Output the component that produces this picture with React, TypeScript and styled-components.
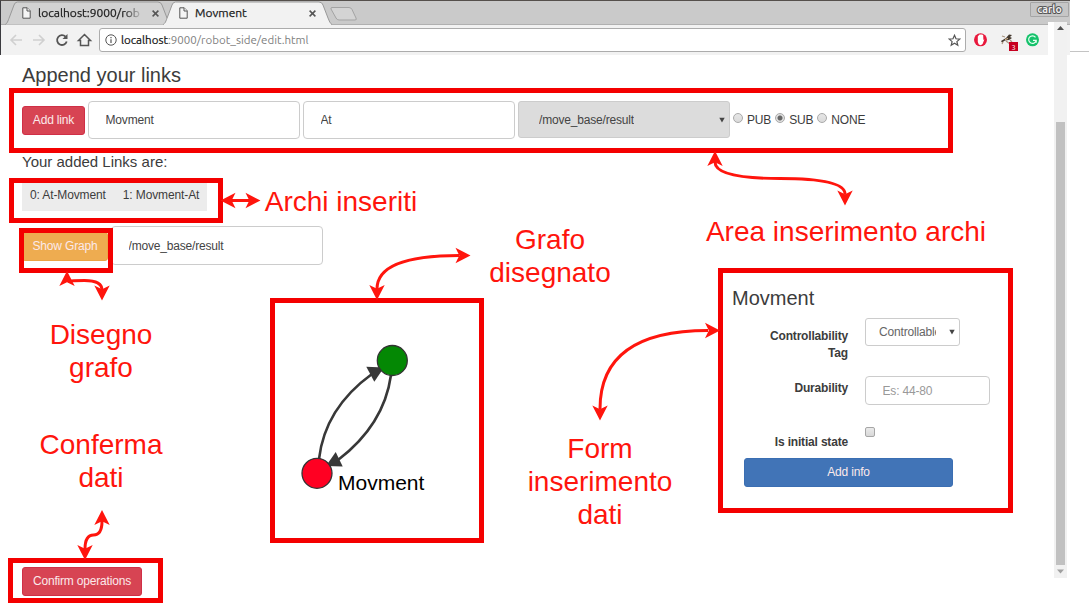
import React from "react";
import styled, { createGlobalStyle, css } from "styled-components";

const GlobalStyle = createGlobalStyle`
  * { box-sizing: border-box; }
  html, body { margin: 0; padding: 0; background: #fff; overflow: hidden; }
  body { font-family: "Liberation Sans", Arial, sans-serif; color: #3c3c3c; }
  input, select, button { font-family: inherit; margin: 0; outline: none; }
`;

const MARK = "#ff150d";

const smallText = css`
  font-size: 12px;
  letter-spacing: -0.18px;
`;

const Screen = styled.div`
  position: relative;
  width: 1091px;
  height: 603px;
  overflow: hidden;
  display: flex;
  flex-direction: column;
`;

/* ---------- browser window ---------- */

const Browser = styled.header`
  width: 1070px;
  height: 55px;
  flex: none;
  display: flex;
  flex-direction: column;
  border-top: 1px solid #55504c;
  border-left: 1px solid #3c3c40;
  background: #f2f2f2;
  font-family: Ubuntu, "Noto Sans", sans-serif;
`;

const TabStrip = styled.div`
  height: 24px;
  flex: none;
  display: flex;
  background: #cacaca;
  border-bottom: 1px solid #b0b0b0;
`;

const TabBox = styled.div<{ $width: number; $active?: boolean }>`
  position: relative;
  z-index: ${(p) => (p.$active ? 2 : 1)};
  width: ${(p) => p.$width}px;
  height: 24px;
  flex: none;
  display: flex;
  align-items: center;
  margin-left: ${(p) => (p.$active ? -8 : 4)}px;
  padding: ${(p) => (p.$active ? "0 16px" : "0 12px 0 17px")};
  color: #1c1c1c;
  > svg { position: relative; flex: none; }
`;

const TabShape = styled.svg`
  && { position: absolute; left: 0; top: 0; overflow: visible; }
`;

const TabTitle = styled.span<{ $fade?: boolean }>`
  position: relative;
  flex: 1;
  margin: 0 9px 0 7px;
  white-space: nowrap;
  font-size: 12px;
  line-height: 16px;
  -webkit-text-stroke: 0.25px #1c1c1c;
  ${(p) =>
    p.$fade &&
    css`
      mask-image: linear-gradient(to right, #000 82%, transparent 100%);
    `}
`;

const NewTab = styled.svg`
  margin: 5px 0 0 -3px;
`;

const UserTag = styled.div`
  margin: 1px 1px 0 auto;
  width: 39px;
  height: 15px;
  border: 1px solid #a5a5a5;
  border-radius: 1px;
  background: #c6c6c6;
  color: #eee;
  font-size: 10.5px;
  font-weight: 600;
  line-height: 13px;
  text-align: center;
  -webkit-text-stroke: 2px #555;
  paint-order: stroke fill;
`;

const Toolbar = styled.div`
  flex: 1;
  display: flex;
  align-items: center;
  padding-left: 8px;
  > svg { flex: none; }
`;

const NavIcons = styled.svg`
  margin-right: 6px;
`;

const Address = styled.div`
  width: 867px;
  height: 24px;
  display: flex;
  align-items: center;
  padding: 0 4px 0 5px;
  border: 1px solid #acacac;
  border-radius: 3px;
  background: #fff;
`;

const Url = styled.span`
  flex: 1;
  margin: -1px 0 0 4px;
  font-size: 11.55px;
  line-height: 16px;
  color: #808080;
  b { font-weight: 400; color: #111; -webkit-text-stroke: 0.2px #111; }
`;

const Extensions = styled.svg`
  margin-left: 8px;
`;

const ScrollGutter = styled.div`
  position: absolute;
  left: 1048px;
  top: 22px;
  width: 19px;
  height: 556px;
  padding-left: 6px;
  background: #fff;
`;

const ScrollTrack = styled.div`
  width: 13px;
  height: 100%;
  display: flex;
  flex-direction: column;
  align-items: center;
  justify-content: space-between;
  background: #f1f1f1;
`;

const ScrollThumb = styled.div`
  width: 9px;
  height: 443px;
  margin-top: 88px;
  background: #c1c1c1;
`;

const EdgeRule = styled.div`
  position: absolute;
  left: 1070px;
  top: 51px;
  width: 19px;
  height: 1px;
  background: #c4c4c4;
`;

/* ---------- page ---------- */

const Page = styled.main`
  flex: 1;
  display: flex;
  flex-direction: column;
  padding: 8px 0 0 22px;
`;

const Title = styled.h1`
  margin: 0;
  font-size: 20px;
  font-weight: 400;
  line-height: 24px;
`;

const LinkRow = styled.div`
  display: flex;
  align-items: center;
  gap: 3px;
  height: 39px;
  margin-top: 13px;
  > button { margin-top: 2px; }
`;

type Tone = "danger" | "warning" | "primary";
const tones: Record<Tone, [string, string]> = {
  danger: ["#d74453", "#d02f46"],
  warning: ["#eeac50", "#eba445"],
  primary: ["#4174b7", "#3b6eb2"],
};

const Button = styled.button<{ $tone: Tone; $width: number }>`
  flex: none;
  width: ${(p) => p.$width}px;
  height: 29px;
  padding: 0;
  border: 1px solid ${(p) => tones[p.$tone][1]};
  border-radius: 3px;
  background: ${(p) => tones[p.$tone][0]};
  color: #fbe9ea;
  ${smallText}
  line-height: 27px;
`;

const TextField = styled.input<{ $width: number; $height: number }>`
  width: ${(p) => p.$width}px;
  height: ${(p) => p.$height}px;
  padding: 0 16.5px;
  border: 1px solid #ccc;
  border-radius: 4px;
  background: #fff;
  color: #444;
  ${smallText}
  &::placeholder { color: #999; opacity: 1; }
`;

const SelectWrap = styled.div<{ $width: number; $height: number; $filled?: boolean }>`
  width: ${(p) => p.$width}px;
  height: ${(p) => p.$height}px;
  display: flex;
  align-items: center;
  border: 1px solid #ccc;
  border-radius: 3px;
  background: ${(p) => (p.$filled ? "#dcdcdc" : "#fff")};
  padding: 0 4px 0 ${(p) => (p.$filled ? 20 : 13)}px;
`;

const SelectText = styled.span<{ $clip?: number }>`
  width: ${(p) => (p.$clip ? `${p.$clip}px` : "auto")};
  overflow: hidden;
  white-space: nowrap;
  ${smallText}
  line-height: 16px;
  color: ${(p) => (p.$clip ? "#666" : "#444")};
`;

const Caret = styled.svg`
  margin-left: auto;
`;

const Radios = styled.div`
  display: flex;
  align-items: center;
  ${smallText}
`;

const Radio = styled.label<{ $gap: number }>`
  display: flex;
  align-items: center;
  gap: 4px;
  margin-right: ${(p) => p.$gap}px;
  line-height: 16px;
`;

const RadioDot = styled.input`
  appearance: none;
  width: 10px;
  height: 10px;
  margin-bottom: 3px;
  border: 1px solid #a9a9a9;
  border-radius: 50%;
  background: linear-gradient(#e6e6e6, #dadada);
  &:checked {
    background: radial-gradient(circle, #666 0 2px, #e0e0e0 3px);
  }
`;

const Subtitle = styled.h2`
  margin: 13.5px 0 0;
  font-size: 15px;
  font-weight: 400;
  line-height: 18px;
`;

const LinkList = styled.ul`
  align-self: flex-start;
  display: flex;
  gap: 17px;
  width: 185px;
  height: 31px;
  margin: 9.5px 0 0;
  padding: 0 8px;
  list-style: none;
  background: #ececec;
  font-size: 12px;
  letter-spacing: -0.12px;
  line-height: 30px;
  white-space: nowrap;
`;

const GraphRow = styled(LinkRow)`
  margin-top: 15px;
`;

const Workspace = styled.section`
  display: flex;
  align-items: flex-start;
  height: 302px;
`;

const GraphCanvas = styled.svg`
  flex: none;
  margin: 38px 0 0 253px;
`;

const InfoForm = styled.form`
  width: 280px;
  margin: 22px 0 0 253px;
`;

const FormTitle = styled.h2`
  margin: 0 0 8px;
  font-size: 20px;
  font-weight: 400;
  line-height: 23px;
`;

const Field = styled.div<{ $height: number }>`
  display: grid;
  grid-template-columns: 116px 1fr;
  column-gap: 17px;
  align-items: start;
  height: ${(p) => p.$height}px;
`;

const Label = styled.label<{ $top: number }>`
  padding: ${(p) => p.$top}px 0 0 30px;
  text-align: right;
  ${smallText}
  font-weight: 700;
  line-height: 16.6px;
  white-space: pre-line;
`;

const Checkbox = styled.input`
  appearance: none;
  width: 10px;
  height: 10px;
  border: 1px solid #a6a6a6;
  border-radius: 2px;
  background: linear-gradient(#eaeaea, #d8d8d8);
`;

const FormAction = styled.div`
  padding-left: 12px;
`;

const Footer = styled.footer`
  display: flex;
`;

/* ---------- annotations over the page ---------- */

const Frame = styled.div<{ $x: number; $y: number; $w: number; $h: number }>`
  position: absolute;
  left: ${(p) => p.$x}px;
  top: ${(p) => p.$y}px;
  width: ${(p) => p.$w}px;
  height: ${(p) => p.$h}px;
  border: 5px solid #f40000;
`;

const Note = styled.div<{ $x: number; $y: number }>`
  position: absolute;
  left: ${(p) => p.$x}px;
  top: ${(p) => p.$y}px;
  transform: translateX(-50%);
  color: ${MARK};
  font-size: 28px;
  line-height: 33px;
  text-align: center;
  white-space: pre;
`;

const ArrowLayer = styled.svg`
  position: absolute;
  left: 0;
  top: 0;
  pointer-events: none;
`;

const frames = [
  [9, 88, 944, 65],
  [9, 178, 214, 45],
  [19, 228, 94, 45],
  [270, 298, 214, 245],
  [718, 268, 295, 245],
  [8, 558, 155, 45],
];

const notes: [number, number, string][] = [
  [341, 185, "Archi inseriti"],
  [846, 215, "Area inserimento archi"],
  [550, 223, "Grafo\ndisegnato"],
  [101, 318, "Disegno\ngrafo"],
  [101, 428, "Conferma\ndati"],
  [600, 432, "Form\ninserimento\ndati"],
];

const curves = [
  "M230 200.5H250",
  "M715 162Q715 178.5 780 178.5T845 194",
  "M67 282Q67 280.5 84.5 280.5T102 290",
  "M377 289Q377 255.5 459 255.5",
  "M600 409Q600 330.5 708 330.5",
  "M102 521Q102 535 93.5 535T85 549",
];

const heads = [
  [220.5, 200.5, 180],
  [260.5, 200.5, 0],
  [715, 151, -90],
  [845, 205.5, 90],
  [67, 271, -90],
  [102, 300.5, 90],
  [377, 300, 90],
  [470.5, 255.5, 0],
  [600, 420.5, 90],
  [720, 330.5, 0],
  [102, 510, -90],
  [85, 560, 90],
];

function PageIcon() {
  return (
    <svg width="9" height="12" viewBox="0 0 9 12" fill="#f4f4f4" stroke="#555" strokeWidth="1">
      <path d="M.8.8h4.4l3 3v7.4H.8z" />
      <path d="M5 .8v3.2h3.2" />
    </svg>
  );
}

function CloseIcon() {
  return (
    <svg width="7" height="7" viewBox="0 0 7 7" stroke="#555" strokeWidth="1.5">
      <path d="M.6.6l5.8 5.8M6.4.6L.6 6.4" />
    </svg>
  );
}

function Tab({ title, width, active, fade }: { title: string; width: number; active?: boolean; fade?: boolean }) {
  return (
    <TabBox $width={width} $active={active}>
      <TabShape width={width} height="24" fill={active ? "#f2f2f2" : "#d2d2d2"} stroke="#999">
        <path d={`M0 23.5C2 23 3 20 4.5 16L9 4Q10 1 12.5 1H${width - 13}Q${width - 10} 1 ${width - 9} 4L${width - 4} 17Q${width - 2} 23 ${width} 23.5`} />
        {active && <path d={`M1 23.5H${width - 1}`} stroke="#f2f2f2" strokeWidth="1.4" />}
      </TabShape>
      <PageIcon />
      <TabTitle $fade={fade}>{title}</TabTitle>
      <CloseIcon />
    </TabBox>
  );
}

function Down() {
  return (
    <Caret width="6" height="6" viewBox="0 0 6 6">
      <path d="M.3.8h5.4L3 5.6z" fill="#444" />
    </Caret>
  );
}

function BrowserBar() {
  return (
    <Browser>
      <TabStrip>
        <Tab title="localhost:9000/rob" width={166} fade />
        <Tab title="Movment" width={169} active />
        <NewTab width="30" height="16" viewBox="0 0 30 16" fill="#d4d4d4" stroke="#a3a3a3">
          <path d="M3 1.5H20Q22 1.5 23 3.5L27 12Q28 14 26 14H10Q8 14 7 12L2 3Q1.5 1.5 3 1.5z" />
        </NewTab>
        <UserTag>carlo</UserTag>
      </TabStrip>
      <Toolbar>
        <NavIcons width="84" height="16" viewBox="0 0 84 16" fill="none" strokeWidth="1.6">
          <path d="M13 8H2M7 3L2 8l5 5" stroke="#d0d0d0" />
          <path d="M24 8h11M30 3l5 5-5 5" stroke="#d0d0d0" />
          <path d="M56.5 4.6A4.9 4.9 0 1 0 57.700 9.5" stroke="#555" strokeWidth="1.8" />
          <path d="M58.5 2v5h-5z" fill="#555" />
          <path d="M69.500 8.500L75.500 2.500l6 6H79.500v5h-8v-5z" stroke="#555" strokeWidth="1.5" />
        </NavIcons>
        <Address>
          <svg width="12" height="12" viewBox="0 0 12 12" fill="none" stroke="#555">
            <circle cx="6" cy="6" r="5.2" />
            <path d="M6 5.3v3.7M6 3v1.3" strokeWidth="1.2" />
          </svg>
          <Url>
            <b>localhost</b>:9000/robot_side/edit.html
          </Url>
          <svg width="13" height="13" viewBox="0 0 13 13" fill="none" stroke="#555" strokeWidth="1.2">
            <path d="M6.5 1.3l1.500 3.500 3.800.3-2.900 2.500.9 3.700-3.300-2-3.300 2 .9-3.700L1.200 5.100 5 4.800z" />
          </svg>
        </Address>
        <Extensions width="70" height="26" viewBox="0 0 70 26">
          <circle cx="6.500" cy="12.800" r="6.500" fill="#e8183c" />
          <path d="M3.800 9.500l1-1.300.8-.7h2.600l1 .8.200 4.700 1-.7-1.800 4.700-1.800 1.200-2-.8-1-2.300z" fill="#fff" />
          <path d="M27 14l5-3 3-3.500 3 .5-2 2 2 1-3 2-4 .5-3 2z" fill="#44392f" />
          <path d="M28 9l3 1M32 14l4 3M29 15l-1 2M36 13l2 2" stroke="#a99783" strokeWidth="1.200" />
          <path d="M31 12.500l3-1" stroke="#e8c49a" />
          <rect x="35" y="15" width="9" height="9" fill="#c70020" />
          <text x="39.500" y="22.500" fontSize="7.500" fill="#fff" textAnchor="middle">3</text>
          <circle cx="58.500" cy="12.800" r="6.500" fill="#15c26b" />
          <path d="M61.500 10.300A3.800 3.800 0 1 0 62.200 13.300H59M62.200 13.300v2.500" fill="none" stroke="#e8fff3" strokeWidth="1.200" />
        </Extensions>
      </Toolbar>
    </Browser>
  );
}

function LinkEditor() {
  return (
    <>
      <Title>Append your links</Title>
      <LinkRow>
        <Button $tone="danger" $width={63}>Add link</Button>
        <TextField $width={212} $height={38} defaultValue="Movment" />
        <TextField $width={212} $height={38} defaultValue="At" />
        <SelectWrap $width={212} $height={37} $filled>
          <SelectText>/move_base/result</SelectText>
          <Down />
        </SelectWrap>
        <Radios>
          <Radio $gap={4}><RadioDot type="radio" name="kind" />PUB</Radio>
          <Radio $gap={4}><RadioDot type="radio" name="kind" defaultChecked />SUB</Radio>
          <Radio $gap={0}><RadioDot type="radio" name="kind" />NONE</Radio>
        </Radios>
      </LinkRow>
      <Subtitle>Your added Links are:</Subtitle>
      <LinkList>
        <li>0: At-Movment</li>
        <li>1: Movment-At</li>
      </LinkList>
    </>
  );
}

function Graph() {
  return (
    <GraphCanvas width="204" height="235" viewBox="275 303 204 235">
      <g fill="none" stroke="#383838" strokeWidth="2.6">
        <path d="M319 459Q325 408 372 374" />
        <path d="M391 375Q384 425 338 460" />
      </g>
      <path d="M366.3 366.7L384 367.5L374.3 381.7z" fill="#383838" />
      <path d="M335.7 452L342.7 466.5L326 466z" fill="#383838" />
      <circle cx="392.3" cy="360.5" r="15" fill="#048804" stroke="#333" strokeWidth="1.3" />
      <circle cx="317" cy="473.3" r="15" fill="#ff0022" stroke="#333" strokeWidth="1.3" />
      <text x="338" y="490" fontSize="21" fill="#000">Movment</text>
    </GraphCanvas>
  );
}

function StateForm() {
  return (
    <InfoForm>
      <FormTitle>Movment</FormTitle>
      <Field $height={58}>
        <Label $top={10}>{"Controllability\nTag"}</Label>
        <SelectWrap $width={95} $height={28}>
          <SelectText $clip={57}>Controllable</SelectText>
          <Down />
        </SelectWrap>
      </Field>
      <Field $height={51}>
        <Label $top={4}>Durability</Label>
        <TextField $width={125} $height={29} placeholder="Es: 44-80" />
      </Field>
      <Field $height={31}>
        <Label $top={7}>Is initial state</Label>
        <Checkbox type="checkbox" />
      </Field>
      <FormAction>
        <Button type="button" $tone="primary" $width={209}>Add info</Button>
      </FormAction>
    </InfoForm>
  );
}

function Annotations() {
  return (
    <>
      {frames.map(([x, y, w, h]) => (
        <Frame key={`${x}-${y}`} $x={x} $y={y} $w={w} $h={h} />
      ))}
      <ArrowLayer width="1091" height="603">
        <g fill="none" stroke={MARK} strokeWidth="3">
          {curves.map((d) => <path key={d} d={d} />)}
        </g>
        {heads.map(([x, y, a]) => (
          <path key={`${x}-${y}`} d="M0 0L-15 7.7L-11.2 0L-15 -7.7z" fill={MARK} transform={`translate(${x} ${y}) rotate(${a})`} />
        ))}
      </ArrowLayer>
      {notes.map(([x, y, text]) => (
        <Note key={text} $x={x} $y={y}>{text}</Note>
      ))}
    </>
  );
}

export default function App() {
  return (
    <Screen>
      <GlobalStyle />
      <BrowserBar />
      <Page>
        <LinkEditor />
        <GraphRow>
          <Button $tone="warning" $width={86}>Show Graph</Button>
          <TextField $width={212} $height={39} defaultValue="/move_base/result" />
        </GraphRow>
        <Workspace>
          <Graph />
          <StateForm />
        </Workspace>
        <Footer>
          <Button $tone="danger" $width={120}>Confirm operations</Button>
        </Footer>
      </Page>
      <EdgeRule />
      <ScrollGutter>
        <ScrollTrack>
          <svg width="13" height="12" viewBox="0 0 13 12"><path d="M3 8L6.5 4L10 8z" fill="#505050" /></svg>
          <ScrollThumb />
          <svg width="13" height="13" viewBox="0 0 13 13"><path d="M3 4.5L6.5 8.5L10 4.5z" fill="#a0a0a0" /></svg>
        </ScrollTrack>
      </ScrollGutter>
      <Annotations />
    </Screen>
  );
}
